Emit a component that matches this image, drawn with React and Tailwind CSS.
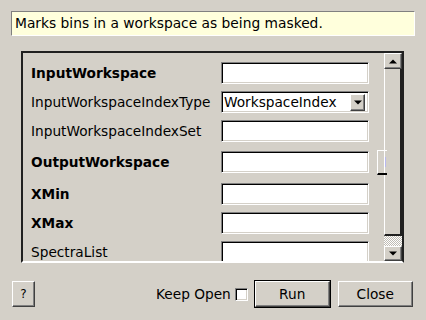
const rows = [
    { label: "InputWorkspace", bold: true, mt: "mt-[9px]" },
    { label: "InputWorkspaceIndexType", bold: false, mt: "mt-[7px]", combo: "WorkspaceIndex" },
    { label: "InputWorkspaceIndexSet", bold: false, mt: "mt-[7px]" },
    { label: "OutputWorkspace", bold: true, mt: "mt-[9px]" },
    { label: "XMin", bold: true, mt: "mt-[10px]" },
    { label: "XMax", bold: true, mt: "mt-[7px]" },
    { label: "SpectraList", bold: false, mt: "mt-[7px]" },
];

const sunken =
    "border border-t-[#808080] border-l-[#808080] border-b-white border-r-white shadow-[inset_1px_1px_0_#000,inset_-1px_-1px_0_#d4d0c8]";
const raised =
    "border border-t-white border-l-white border-b-[#404040] border-r-[#404040] shadow-[inset_-1px_-1px_0_#808080]";

const Arrow = ({ up }) => (
    <svg width="8" height="5" viewBox="0 0 8 5">
        <path d={up ? "M0 4.5 L4 0.5 L8 4.5 Z" : "M0 0.5 L8 0.5 L4 4.5 Z"} fill="#000" />
    </svg>
);

const Row = ({ label, bold, mt, combo }) => (
    <div className={`flex items-center h-[22px] ${mt}`}>
        <span className={`w-[190px] pl-[8px] box-content whitespace-nowrap ${bold ? "font-bold" : ""}`}>{label}</span>
        {combo ? (
            <div className={`w-[148px] h-[22px] bg-white flex items-center pl-[2px] pr-[3px] ${sunken}`}>
                <span className="flex-1 whitespace-nowrap">{combo}</span>
                <div className={`w-[15px] h-[17px] bg-[#d4d0c8] flex items-center justify-center ${raised}`}>
                    <Arrow />
                </div>
            </div>
        ) : (
            <div className={`w-[148px] h-[22px] bg-white ${sunken}`} />
        )}
    </div>
);

const App = () => {
    return (
        <div className="w-[426px] h-[320px] bg-[#d4d0c8] font-['DejaVu_Sans',sans-serif] text-[13.7px] text-black overflow-hidden pt-[11px]">
            <div className="mx-[11px] h-[25px] bg-[#ffffdc] border border-t-[#808080] border-l-[#808080] border-b-white border-r-white flex items-center pl-[3px] text-[13.8px] whitespace-nowrap">
                Marks bins in a workspace as being masked.
            </div>

            <div className="relative ml-[21px] mt-[15px] w-[383px] h-[212px] flex border-2 border-t-[#202020] border-l-[#202020] border-b-white border-r-[#202020]">
                <div className="flex-1 overflow-hidden">
                    {rows.map((r) => (
                        <Row key={r.label} {...r} />
                    ))}
                </div>

                <div className="absolute left-[354px] top-[97px] w-[10px] h-[25px] border-l border-t border-b-2 border-l-white border-t-white border-b-black">
                    <div className="ml-[7px] mt-[6px] w-px h-[10px] bg-[#b8b8f0]" />
                </div>

                <div className="w-[18px] flex flex-col">
                    <div className={`h-[16px] bg-[#d4d0c8] flex items-center justify-center ${raised}`}>
                        <Arrow up />
                    </div>
                    <div className="flex-1 border-l border-l-white border-r-2 border-r-[#202020] border-b-2 border-b-[#202020]" />
                    <div className="h-[10px] bg-[image:repeating-conic-gradient(#ffffff_0_25%,#c0bcb4_0_50%)] bg-[length:2px_2px]" />
                    <div className={`h-[15px] bg-[#d4d0c8] flex items-center justify-center ${raised}`}>
                        <Arrow />
                    </div>
                </div>
            </div>

            <div className="flex items-center mt-[17px] pl-[12px] h-[28px]">
                <button className={`w-[23px] h-[26px] bg-[#d4d0c8] text-[12px] ${raised}`}>?</button>
                <span className="ml-[121px] whitespace-nowrap">Keep Open</span>
                <div className={`ml-[4px] w-[13px] h-[13px] bg-white ${sunken}`} />
                <button className="ml-[6px] w-[77px] h-[28px] border border-black bg-[#d4d0c8]">
                    <div className={`w-full h-full flex items-center justify-center ${raised}`}>Run</div>
                </button>
                <button className={`ml-[7px] w-[75px] h-[26px] bg-[#d4d0c8] ${raised}`}>Close</button>
            </div>
        </div>
    );
};

export default App;
